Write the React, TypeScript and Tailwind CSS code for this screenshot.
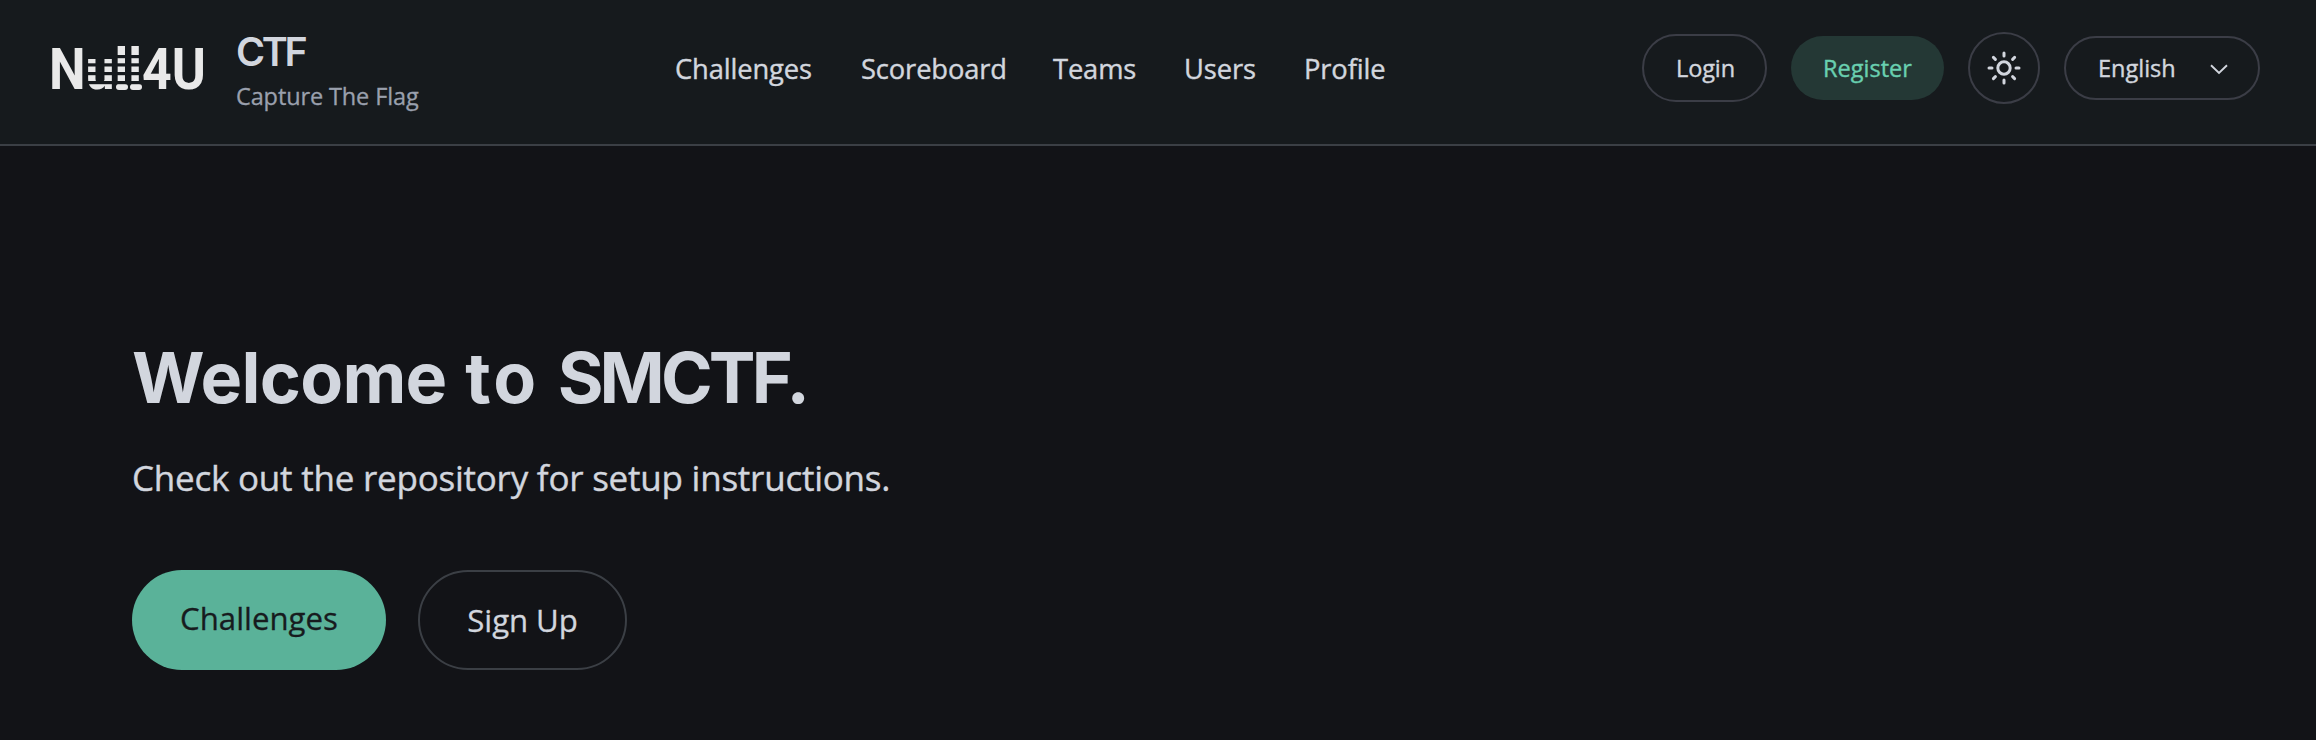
import React from 'react'

const NAV_ITEMS = [
    { label: 'Challenges', className: 'w-[186px]' },
    { label: 'Scoreboard', className: 'w-[192px]' },
    { label: 'Teams', className: 'w-[131px]' },
    { label: 'Users', className: 'w-[120px]' },
    { label: 'Profile', className: 'w-[90px]' },
]

// Horizontal cuts through the middle letters of the logo
const LOGO_CUTS = [35, 43.3, 52, 61]

const Logo = () => (
    <svg width="160" height="96" viewBox="0 0 160 96" className="shrink-0 overflow-visible" fill="#e9e9e9" fontFamily="Roboto, sans-serif" fontWeight={700}>
        <text x="1" y="69" fontSize="58" textLength="157" lengthAdjust="spacingAndGlyphs">Null4U</text>
        <rect x="68" y="64" width="12" height="6" rx="3" />
        <rect x="82" y="64" width="12" height="6" rx="3" />
        {LOGO_CUTS.map((y) => (
            <rect key={y} x="36.5" y={y} width="56.5" height="3.2" fill="#161a1d" />
        ))}
    </svg>
)

const SunIcon = () => (
    <svg width="34" height="34" viewBox="0 0 34 34" fill="none" stroke="#d2d6de" strokeWidth="3" strokeLinecap="round">
        <circle cx="17" cy="17" r="6.2" />
        <path d="M17 2v3M17 29v3M2 17h3M29 17h3M6.4 6.4l2 2M25.6 25.6l2 2M6.4 27.6l2-2M25.6 8.4l2-2" />
    </svg>
)

const ChevronIcon = () => (
    <svg width="18" height="11" viewBox="0 0 18 11" fill="none" stroke="#d2d6de" strokeWidth="1.9">
        <path d="M1 1.2l8 7.8 8-7.8" />
    </svg>
)

const Header = () => (
    <header className="flex h-[146px] items-center border-b-2 border-[#3b3f45] bg-[#161a1d] pr-14 pb-2 pl-12">
        <div className="flex w-[627px] items-center gap-7">
            <Logo />
            <div className="pt-[9px]">
                <p className="font-['Inter',sans-serif] text-[39.5px] leading-[47px] font-semibold tracking-[-3.3px]">CTF</p>
                <p className="text-[23.5px] leading-10 tracking-[-0.12px] text-[#9aa0ad] [-webkit-text-stroke:0.3px]">Capture The Flag</p>
            </div>
        </div>
        <nav className="flex pt-px text-[27.3px] leading-10 tracking-[-0.12px] [-webkit-text-stroke:0.4px]">
            {NAV_ITEMS.map((item) => (
                <a key={item.label} href="#" className={item.className}>{item.label}</a>
            ))}
        </nav>
        <div className="ml-auto flex items-center gap-6 text-[23.5px] [-webkit-text-stroke:0.4px]">
            <button className="h-[68px] w-[125px] rounded-full border-2 border-[#3b3d46] pt-0.5 pl-0.5 tracking-[-0.1px]">Login</button>
            <button className="h-16 w-[153px] rounded-full bg-[#243835] pt-0.5 text-[#69d0b0]">Register</button>
            <button className="flex size-[72px] items-center justify-center rounded-full border-2 border-[#3b3d46]">
                <SunIcon />
            </button>
            <button className="flex h-16 w-[196px] items-center justify-between rounded-full border-2 border-[#3b3d46] pt-0.5 pr-[30px] pl-8">
                English
                <ChevronIcon />
            </button>
        </div>
    </header>
)

const Hero = () => (
    <main className="px-[132px] pt-[186px]">
        <h1 className="font-['Inter',sans-serif] text-[70px] leading-[92px] font-bold whitespace-nowrap">
            <span className="tracking-[-0.7px]">Welcome</span> <span className="ml-0.5 tracking-[3px]">to</span> <span className="ml-0.5 tracking-[-3.9px]">SMCTF.</span>
        </h1>
        <p className="mt-[27px] text-[35px] leading-[54px] tracking-[-0.23px] [-webkit-text-stroke:0.4px]">Check out the repository for setup instructions.</p>
        <div className="mt-[65px] flex gap-8 text-[31.2px] [-webkit-text-stroke:0.3px]">
            <button className="h-[100px] w-[254px] rounded-full bg-[#5ab299] pb-1 text-[#171b1e]">Challenges</button>
            <button className="h-[100px] w-[209px] rounded-full border-2 border-[#3b3f45] tracking-[-0.1px]">Sign Up</button>
        </div>
    </main>
)

const App = () => {
    return (
        <div className="h-[740px] overflow-hidden bg-[#121317] font-['Open_Sans',sans-serif] text-[#d2d6de]">
            <Header />
            <Hero />
        </div>
    )
}

export default App
